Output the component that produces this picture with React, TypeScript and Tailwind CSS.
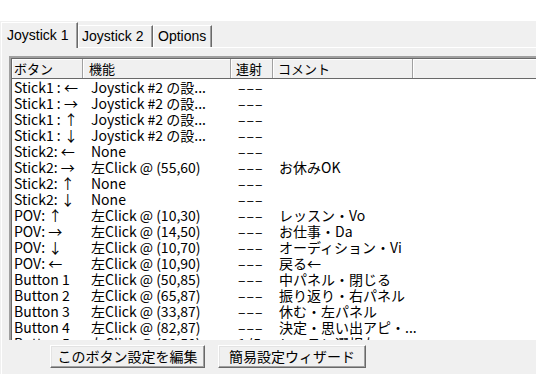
import React from "react";

const rows: [string, string, string, string][] = [
  ["Stick1 : ←", "Joystick #2 の設...", "–––", ""],
  ["Stick1 : →", "Joystick #2 の設...", "–––", ""],
  ["Stick1 : ↑", "Joystick #2 の設...", "–––", ""],
  ["Stick1 : ↓", "Joystick #2 の設...", "–––", ""],
  ["Stick2: ←", "None", "–––", ""],
  ["Stick2: →", "左Click @ (55,60)", "–––", "お休みOK"],
  ["Stick2: ↑", "None", "–––", ""],
  ["Stick2: ↓", "None", "–––", ""],
  ["POV: ↑", "左Click @ (10,30)", "–––", "レッスン・Vo"],
  ["POV: →", "左Click @ (14,50)", "–––", "お仕事・Da"],
  ["POV: ↓", "左Click @ (10,70)", "–––", "オーディション・Vi"],
  ["POV: ←", "左Click @ (10,90)", "–––", "戻る←"],
  ["Button 1", "左Click @ (50,85)", "–––", "中パネル・閉じる"],
  ["Button 2", "左Click @ (65,87)", "–––", "振り返り・右パネル"],
  ["Button 3", "左Click @ (33,87)", "–––", "休む・左パネル"],
  ["Button 4", "左Click @ (82,87)", "–––", "決定・思い出アピ・..."],
  ["Button 5", "左Click @ (30,50)", "1/5", "レッスン選択左"],
];

const font = "font-['Noto_Sans_CJK_JP','Noto_Sans',sans-serif]";

export default function App() {
  return (
    <div className={`w-[536px] h-[374px] overflow-hidden bg-white ${font}`}>
      <div className="h-[21px] bg-white" />
      <div className="h-[353px] bg-[#f0f0f0] flex flex-col">
        {/* tabs */}
        <div className="flex items-end h-[26px] pl-[1px] font-['Liberation_Sans',Arial,sans-serif] text-[14px] text-black">
          <div className="w-[77px] h-[26px] -mb-[1px] border-t border-l border-white border-r border-r-[#696969] shadow-[inset_-1px_0_0_#a0a0a0] flex items-center pl-[5px] pb-[1px] relative z-10 bg-[#f0f0f0]">
            Joystick 1
          </div>
          <div className="h-[22px] w-[75px] border-t border-l border-white border-r border-r-[#696969] shadow-[inset_-1px_0_0_#a0a0a0] flex items-center pl-[3px]">
            Joystick 2
          </div>
          <div className="h-[22px] w-[59px] border-t border-l border-white border-r border-r-[#696969] shadow-[inset_-1px_0_0_#a0a0a0] flex items-center pl-[4px]">
            Options
          </div>
        </div>
        {/* panel */}
        <div className="flex-1 ml-[1px] border-t border-l border-white flex flex-col">
          <div className="ml-[7px] mt-[8px] w-[540px] h-[284px] border-t-2 border-l-2 border-t-[#a0a0a0] border-l-[#a0a0a0] shadow-[inset_1px_1px_0_#696969] bg-white overflow-hidden text-[14px] text-black leading-[16px]">
            <div className="flex h-[20px] bg-[#f0f0f0] border-b border-[#696969] ml-[1px] mt-[1px] text-[13px]">
              <div className="w-[71px] h-full border-r border-[#a0a0a0] shadow-[inset_1px_1px_0_#ffffff] flex items-center pl-[2px]">ボタン</div>
              <div className="w-[148px] h-full border-r border-[#a0a0a0] shadow-[inset_1px_1px_0_#ffffff] flex items-center pl-[6px]">機能</div>
              <div className="w-[42px] h-full border-r border-[#a0a0a0] shadow-[inset_1px_1px_0_#ffffff] flex items-center pl-[5px]">連射</div>
              <div className="w-[140px] h-full border-r border-[#a0a0a0] shadow-[inset_1px_1px_0_#ffffff] flex items-center pl-[5px]">コメント</div>
              <div className="flex-1 h-full shadow-[inset_1px_1px_0_#ffffff]" />
            </div>
            <div className="flex flex-col">
              {rows.map((r, i) => (
                <div key={i} className="flex h-[16px] whitespace-nowrap">
                  <div className="w-[80px] pl-[3px]">{r[0]}</div>
                  <div className="w-[147px]">{r[1]}</div>
                  <div className="w-[41px] tracking-[1px]">{r[2]}</div>
                  <div className="flex-1">{r[3]}</div>
                </div>
              ))}
            </div>
          </div>
          <div className="flex mt-[5px] text-[14px] text-black">
            <div className="ml-[48px] w-[155px] h-[23px] border border-t-white border-l-white border-r-[#696969] border-b-[#696969] shadow-[inset_-1px_-1px_0_#a0a0a0,inset_1px_1px_0_#e3e3e3] flex items-center justify-center">
              このボタン設定を編集
            </div>
            <div className="ml-[13px] w-[148px] h-[23px] border border-t-white border-l-white border-r-[#696969] border-b-[#696969] shadow-[inset_-1px_-1px_0_#a0a0a0,inset_1px_1px_0_#e3e3e3] flex items-center justify-center">
              簡易設定ウィザード
            </div>
          </div>
        </div>
      </div>
    </div>
  );
}
